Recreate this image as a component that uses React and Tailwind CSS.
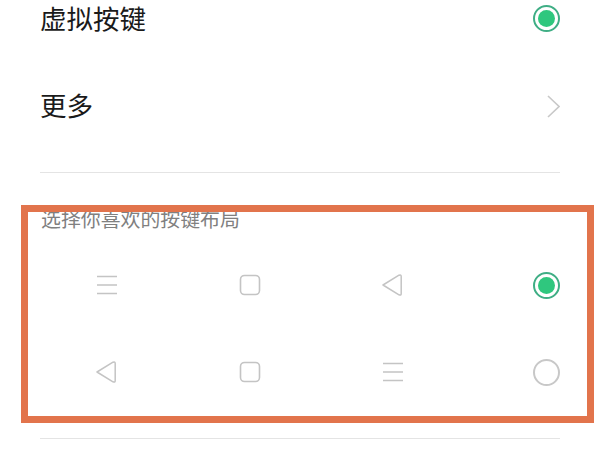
function Radio({ checked }) {
  if (!checked) {
    return <div className="w-[27px] h-[27px] rounded-full border-2 border-[#c8c8c8]"></div>;
  }
  return (
    <div className="w-[27px] h-[27px] rounded-full border-2 border-[#3fae85] flex items-center justify-center">
      <div className="w-[17px] h-[17px] rounded-full bg-[#2fc77e]"></div>
    </div>
  );
}

function MenuIcon() {
  return (
    <svg width="20" height="20" viewBox="0 0 20 20" fill="none" stroke="#c4c4c4" strokeWidth="1.4">
      <path d="M0 1.5h20M0 10h20M0 18.5h20" />
    </svg>
  );
}

function SquareIcon() {
  return (
    <svg width="22" height="22" viewBox="0 0 22 22" fill="none" stroke="#c4c4c4" strokeWidth="1.6">
      <rect x="1.5" y="1.5" width="19" height="19" rx="4" />
    </svg>
  );
}

function BackIcon() {
  return (
    <svg width="22" height="24" viewBox="0 0 22 24" fill="none" stroke="#c4c4c4" strokeWidth="1.5" strokeLinejoin="round">
      <path d="M1 12 L17 2.2 Q19.2 1.4 19.2 3.4 V20.8 Q19.2 22.6 17 21.8 Z" />
    </svg>
  );
}

function LayoutRow({ icons, checked }) {
  return (
    <div className="grid grid-cols-[132px_154px_132px_1fr] items-center h-10">
      {icons.map((icon, i) => (
        <div key={i} className="flex justify-center">
          {icon}
        </div>
      ))}
      <div className="flex justify-end">
        <Radio checked={checked} />
      </div>
    </div>
  );
}

export default function App() {
  return (
    <div
      className="relative w-[600px] h-[450px] overflow-hidden bg-white pl-[41px] pr-[40px] font-['Noto_Sans_CJK_SC',sans-serif]"
    >
      <div className="flex items-center justify-between h-[37px] text-[26.5px] leading-none text-[#1a1a1a]">
        <span className="ml-[-1px] pb-[1px]">虚拟按键</span>
        <Radio checked />
      </div>
      <div className="flex items-center justify-between h-[38px] mt-[50px] text-[26.5px] leading-none text-[#1a1a1a]">
        <span className="ml-[-1px] pb-[1px]">更多</span>
        <svg width="13" height="23" viewBox="0 0 13 23" fill="none" stroke="#c8c8c8" strokeWidth="1.6">
          <path d="M1 1 L12 11.5 L1 22" />
        </svg>
      </div>
      <div className="h-px bg-[#e4e4e4] ml-[-1px] mt-[47px]"></div>

      <div className="h-[26px] mt-[33px] flex items-center text-[19.9px] text-[#808080]">选择你喜欢的按键布局</div>

      <div className="mt-[33px]">
        <LayoutRow icons={[<MenuIcon />, <SquareIcon />, <BackIcon />]} checked />
      </div>
      <div className="mt-[47px]">
        <LayoutRow icons={[<BackIcon />, <SquareIcon />, <MenuIcon />]} />
      </div>
      <div className="h-px bg-[#e4e4e4] ml-[-1px] mt-[46px]"></div>

      {/* annotation box drawn over the screenshot */}
      <div className="absolute left-[21px] top-[205px] w-[573px] h-[218px] border-[7px] border-[#e2744c]"></div>
    </div>
  );
}
